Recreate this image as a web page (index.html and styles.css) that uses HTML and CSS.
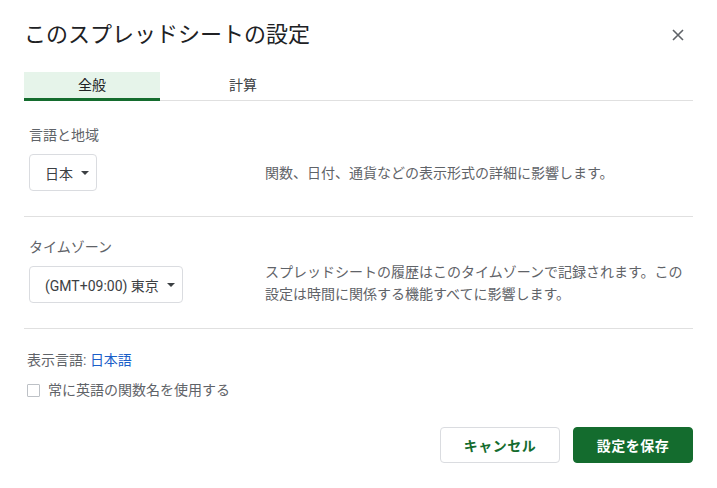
FILE: index.html
```html
<!DOCTYPE html>
<html lang="ja">
<head>
<meta charset="utf-8">
<title>このスプレッドシートの設定</title>
<link rel="stylesheet" href="styles.css">
</head>
<body>
<div class="dialog">
  <div class="header">
    <h1 class="title">このスプレッドシートの設定</h1>
    <button class="close" aria-label="閉じる">
      <svg width="24" height="24" viewBox="0 0 24 24"><path d="M7 7L17 17M17 7L7 17" stroke="#5f6368" stroke-width="1.6" fill="none"/></svg>
    </button>
  </div>
  <div class="tabs">
    <div class="tab tab-active">全般</div>
    <div class="tab tab-calc">計算</div>
  </div>
  <div class="section">
    <div class="label">言語と地域</div>
    <div class="row">
      <div class="select-col">
        <div class="select"><span>日本</span><span class="arrow"></span></div>
      </div>
      <div class="desc">関数、日付、通貨などの表示形式の詳細に影響します。</div>
    </div>
  </div>
  <div class="section section-tz">
    <div class="label">タイムゾーン</div>
    <div class="row row-multi">
      <div class="select-col">
        <div class="select"><span>(GMT+09:00) 東京</span><span class="arrow"></span></div>
      </div>
      <div class="desc">スプレッドシートの履歴はこのタイムゾーンで記録されます。この設定は時間に関係する機能すべてに影響します。</div>
    </div>
  </div>
  <div class="section section-last">
    <div class="label">表示言語: <a class="link" href="#">日本語</a></div>
    <label class="check-row"><span class="checkbox"></span><span>常に英語の関数名を使用する</span></label>
  </div>
  <div class="actions">
    <button class="btn btn-cancel">キャンセル</button>
    <button class="btn btn-save">設定を保存</button>
  </div>
</div>
</body>
</html>
```
FILE: styles.css
```css
* { box-sizing: border-box; }
html, body { margin: 0; padding: 0; background: #fff; }
body {
  font-family: Roboto, "Noto Sans CJK JP", sans-serif;
  color: #3c4043;
  font-size: 14px;
}
.dialog {
  width: 717px;
  height: 488px;
  padding: 17px 24px 0 24px;
}
.header {
  display: flex;
  align-items: center;
  justify-content: space-between;
  height: 36px;
  padding-right: 3px;
}
.title {
  margin: 0;
  font-size: 22px;
  font-weight: 400;
  line-height: 36px;
  color: #202124;
}
.close {
  width: 24px;
  height: 24px;
  padding: 0;
  border: 0;
  background: none;
  display: flex;
}
.tabs {
  margin-top: 19px;
  display: flex;
  height: 29px;
  border-bottom: 1px solid #e0e0e0;
}
.tab {
  height: 29px;
  line-height: 26px;
  text-align: center;
  font-size: 14px;
  color: #3c4043;
  margin-bottom: -1px;
  border-bottom: 3px solid transparent;
}
.tab-active {
  width: 136px;
  background: #e6f4ea;
  border-bottom-color: #146c2e;
  color: #202124;
}
.tab-calc { width: 166px; }
.section {
  padding: 24px 0 25px 5px;
  border-bottom: 1px solid #e0e0e0;
}
.section-tz { padding: 20px 0 23px 5px; }
.section-last {
  border-bottom: 0;
  padding: 21px 0 0 3px;
}
.label {
  line-height: 20px;
  color: #5f6368;
}
.link { color: #1a5fc9; text-decoration: none; }
.row {
  display: flex;
  align-items: center;
  margin-top: 9px;
}
.row-multi {
  align-items: flex-start;
  margin-top: 4px;
}
.row-multi .select-col { padding-top: 5px; }
.select-col { width: 236px; flex: none; }
.select {
  display: inline-flex;
  align-items: center;
  gap: 8px;
  height: 37px;
  padding: 0 7px 0 15px;
  border: 1px solid #dadce0;
  border-radius: 4px;
  color: #3c4043;
}
.arrow {
  width: 0;
  height: 0;
  border-left: 4px solid transparent;
  border-right: 4px solid transparent;
  border-top: 4px solid #3c4043;
}
.desc {
  flex: 1;
  line-height: 22px;
  color: #5f6368;
}
.check-row {
  display: flex;
  align-items: center;
  gap: 8px;
  margin-top: 10px;
  line-height: 20px;
  color: #5f6368;
}
.checkbox {
  width: 13px;
  height: 13px;
  border: 1px solid #bdc1c6;
  border-radius: 1px;
  flex: none;
}
.actions {
  display: flex;
  justify-content: flex-end;
  gap: 13px;
  margin-top: 27px;
}
.btn {
  width: 120px;
  height: 36px;
  border-radius: 4px;
  font-family: Roboto, "Noto Sans CJK JP", sans-serif;
  font-size: 14px;
  font-weight: 700;
  letter-spacing: 0.5px;
}
.btn-cancel {
  background: #fff;
  border: 1px solid #dadce0;
  color: #146c2e;
}
.btn-save {
  background: #146c2e;
  border: 1px solid #146c2e;
  color: #fff;
}
```
